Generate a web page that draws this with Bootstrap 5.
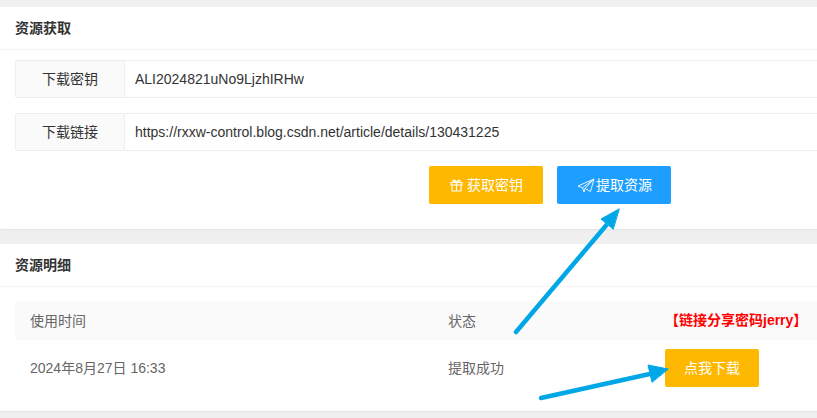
<!DOCTYPE html>
<html lang="zh-CN">
<head>
  <meta charset="UTF-8">
  <title>资源获取</title>
  <link href="https://cdn.jsdelivr.net/npm/bootstrap@5.3.0/dist/css/bootstrap.min.css" rel="stylesheet">
  <style>
    html, body { height: 100%; overflow: hidden; }
    body {
      background: #f0f0f0;
      font-family: "Liberation Sans", "Noto Sans CJK SC", sans-serif;
      font-size: 14px;
      color: #333;
      padding-top: 7px;
      position: relative;
    }
    .panel {
      width: 850px;
      background: #fff;
      border: 0;
      border-radius: 2px;
      box-shadow: 0 1px 2px rgba(0,0,0,.06);
    }
    .panel-one { height: 222px; margin-bottom: 15px; }
    .panel-two { height: 167px; }
    .panel-head {
      height: 43px;
      padding: 0 15px;
      line-height: 42px;
      font-weight: 700;
      color: #333;
      background: #fff;
      border-bottom: 1px solid #f3f3f3;
    }
    .panel-body-one { padding: 10px 15px 0; }
    .key-row { height: 38px; margin-bottom: 15px; }
    .key-row .input-group-text {
      width: 110px;
      justify-content: center;
      background: #fafafa;
      border: 1px solid #eee;
      border-radius: 2px 0 0 2px;
      font-size: 14px;
      color: #333;
      padding: 0;
    }
    .key-row .form-control {
      border: 1px solid #eee;
      border-left: 0;
      border-radius: 0;
      margin-left: 0 !important;
      font-size: 14px;
      color: #333;
      padding: 0 10px;
      box-shadow: none;
    }
    .btn-line { gap: 14px; margin-left: 414px; margin-top: 1px; }
    .act-btn {
      height: 38px;
      width: 114px;
      padding: 0;
      border: 0;
      border-radius: 2px;
      font-size: 14px;
      color: #fff;
      display: flex;
      align-items: center;
      justify-content: center;
    }
    .act-gold, .act-gold:hover { background: #ffb800; color: #fff; }
    .act-blue, .act-blue:hover { background: #1e9fff; color: #fff; }
    .act-btn svg { flex: none; }
    .btn-line .act-btn { padding-left: 1px; }
    .act-gold svg { margin-right: 4px; }
    .act-blue svg { margin-right: 1px; }
    .panel-body-two { padding: 15px 15px 0; }
    .log-table { margin: 0; color: #666; font-size: 14px; table-layout: fixed; width: 820px; }
    .log-table th, .log-table td { border: 0; padding: 0 15px; vertical-align: middle; box-shadow: none; }
    .log-table thead th { height: 38px; background: #fafafa; font-weight: 400; color: #666; }
    .log-table tbody td { height: 56px; background: #fff; color: #666; }
    .col-time { width: 418px; }
    .col-state { width: 232px; }
    .log-table thead .share-tip { padding: 0 0 2px 0; color: #f00; font-weight: 700; font-size: 14px; white-space: nowrap; }
    .log-table .btn-cell { padding-left: 0; }
    .act-small { width: 94px; }
    .arrows { position: absolute; left: 0; top: 0; width: 817px; height: 418px; pointer-events: none; }
  </style>
</head>
<body>

<div class="card panel panel-one">
  <div class="panel-head">资源获取</div>
  <div class="panel-body-one">
    <div class="input-group key-row">
      <span class="input-group-text">下载密钥</span>
      <input type="text" class="form-control" value="ALI2024821uNo9LjzhIRHw">
    </div>
    <div class="input-group key-row">
      <span class="input-group-text">下载链接</span>
      <input type="text" class="form-control" value="https://rxxw-control.blog.csdn.net/article/details/130431225">
    </div>
    <div class="d-flex btn-line">
      <button class="btn act-btn act-gold">
        <svg width="13" height="13" viewBox="0 0 13 13" fill="none" stroke="#fff" stroke-width="1.1"><rect x="1" y="3.5" width="11" height="2.5"/><path d="M2 6v6h9V6M6.5 3.500v8.500M6.500 3.500C5 .5 2.500 .5 3 2.300 3.200 3.200 5 3.500 6.500 3.500ZM6.500 3.500C8 .5 10.500 .5 10 2.300 9.800 3.200 8 3.500 6.500 3.500Z"/></svg>
        获取密钥
      </button>
      <button class="btn act-btn act-blue">
        <svg width="18" height="15" viewBox="0 0 18 15" fill="none" stroke="#e6f4ff" stroke-width="1" stroke-linejoin="round"><path d="M17 1 1 8l4.500 1.800L17 1ZM17 1 8 10.500l5.500 3L17 1ZM5.500 9.800 7 14l1-3.500"/></svg>
        提取资源
      </button>
    </div>
  </div>
</div>

<div class="card panel panel-two">
  <div class="panel-head">资源明细</div>
  <div class="panel-body-two">
    <table class="table log-table">
      <colgroup><col class="col-time"><col class="col-state"><col></colgroup>
      <thead>
        <tr><th>使用时间</th><th>状态</th><th class="share-tip">【链接分享密码jerry】</th></tr>
      </thead>
      <tbody>
        <tr>
          <td>2024年8月27日 16:33</td>
          <td>提取成功</td>
          <td class="btn-cell"><a href="#" class="btn act-btn act-gold act-small">点我下载</a></td>
        </tr>
      </tbody>
    </table>
  </div>
</div>

<svg class="arrows" viewBox="0 0 817 418">
  <g fill="#00a7e6" stroke="#00a7e6" stroke-linecap="round" stroke-linejoin="round">
    <path d="M516 332 609 222" fill="none" stroke-width="4.500"/>
    <path d="M619 209 601 219 613 229Z" stroke-width="1"/>
    <path d="M541 398 652 373.500" fill="none" stroke-width="4.500"/>
    <path d="M668 369 648 365 652 382Z" stroke-width="1"/>
  </g>
</svg>

<script src="https://cdn.jsdelivr.net/npm/bootstrap@5.3.0/dist/js/bootstrap.bundle.min.js"></script>
</body>
</html>
